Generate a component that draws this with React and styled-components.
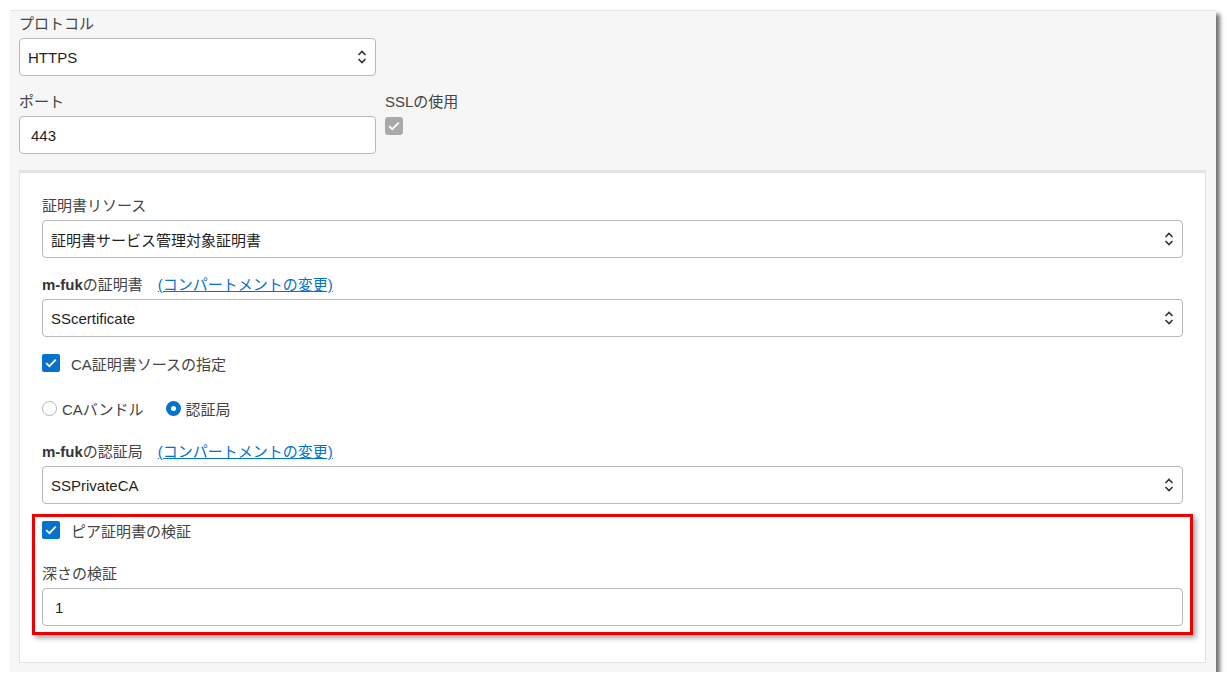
import React from "react";
import styled, { createGlobalStyle } from "styled-components";

const GlobalStyle = createGlobalStyle`
  html, body {
    margin: 0;
    padding: 0;
    background: #ffffff;
  }
  body {
    font-family: "Liberation Sans", "Noto Sans CJK JP", sans-serif;
    font-size: 15px;
    color: #333333;
  }
`;

const Frame = styled.div`
  box-sizing: border-box;
  width: 1206px;
  height: 662px;
  margin: 10px 0 0 10px;
  padding: 3px 10px 9px 9px;
  background: #f6f6f6;
  border-top: 1px solid #e4e4e4;
  box-shadow: 4px 4px 4px rgba(0, 0, 0, 0.55);
  display: flex;
  flex-direction: column;
`;

const Row = styled.div`
  display: flex;
  gap: 9px;
  margin-top: ${(p) => p.$top || 0}px;
`;

const Field = styled.div`
  display: flex;
  flex-direction: column;
  width: ${(p) => (p.$width ? `${p.$width}px` : "100%")};
  margin-top: ${(p) => p.$top || 0}px;
`;

const Label = styled.div`
  height: 20px;
  line-height: 20px;
  margin-bottom: 4px;
  color: #444;
  white-space: nowrap;

  b {
    color: #333;
    font-weight: 700;
  }
`;

const Link = styled.a`
  margin-left: 15px;
  color: #0572ce;
  text-decoration: underline;
  cursor: pointer;
`;

const Control = styled.div`
  box-sizing: border-box;
  height: 38px;
  display: flex;
  align-items: center;
  justify-content: space-between;
  padding: 0 8px 0 ${(p) => p.$pad || 8}px;
  background: #ffffff;
  border: 1px solid #b4b9be;
  border-radius: 4px;
  color: #1f1f1f;
`;

const Card = styled.div`
  box-sizing: border-box;
  flex: 1;
  margin-top: 16px;
  padding: 23px 22px 27px;
  background: #ffffff;
  border: 1px solid #e3e3e3;
  border-top: 3px solid #e4e4e5;
  display: flex;
  flex-direction: column;
`;

const CheckRow = styled.div`
  display: flex;
  align-items: center;
  height: 20px;
  margin-top: ${(p) => p.$top || 0}px;
  color: #444;
`;

const Box = styled.span`
  box-sizing: border-box;
  width: 18px;
  height: 18px;
  border-radius: ${(p) => (p.$disabled ? 3 : 2)}px;
  background: ${(p) => (p.$disabled ? "#a9a9a9" : "#0572ce")};
  display: inline-flex;
  align-items: center;
  justify-content: center;
  margin-right: ${(p) => (p.$gap != null ? p.$gap : 11)}px;
`;

const Radio = styled.span`
  box-sizing: border-box;
  width: 15px;
  height: 15px;
  border-radius: 50%;
  border: ${(p) => (p.$on ? "5px solid #0572ce" : "1px solid #b4b4b4")};
  background: #fff;
  margin-right: 5px;
`;

const RadioItem = styled.label`
  display: flex;
  align-items: center;
  margin-right: 22px;
`;

const Highlight = styled.div`
  margin: 10px -10px 0;
  padding: 3px 7px 6px;
  border: 3px solid #ee0000;
  box-shadow: 3px 3px 5px rgba(0, 0, 0, 0.35);
  display: flex;
  flex-direction: column;
`;

const Check = ({ color = "#fff" }) => (
  <svg width="12" height="10" viewBox="0 0 12 10">
    <path d="M1.2 5.2 L4.3 8.2 L10.8 1.6" fill="none" stroke={color} strokeWidth="1.8" />
  </svg>
);

const Caret = () => (
  <svg width="10" height="16" viewBox="0 0 10 16">
    <path d="M1.5 6 L5 2.5 L8.5 6 M1.5 10 L5 13.5 L8.5 10" fill="none" stroke="#333" strokeWidth="1.6" />
  </svg>
);

const Select = ({ value }) => (
  <Control>
    <span>{value}</span>
    <Caret />
  </Control>
);

const App = () => (
  <>
    <GlobalStyle />
    <Frame>
      <Field $width={357}>
        <Label>プロトコル</Label>
        <Select value="HTTPS" />
      </Field>
      <Row $top={16}>
        <Field $width={357}>
          <Label>ポート</Label>
          <Control $pad={11}>443</Control>
        </Field>
        <Field $width={120}>
          <Label>SSLの使用</Label>
          <CheckRow>
            <Box $disabled $gap={0}>
              <Check />
            </Box>
          </CheckRow>
        </Field>
      </Row>
      <Card>
        <Field>
          <Label>証明書リソース</Label>
          <Select value="証明書サービス管理対象証明書" />
        </Field>
        <Field $top={17}>
          <Label>
            <b>m-fuk</b>の証明書<Link>(コンパートメントの変更)</Link>
          </Label>
          <Select value="SScertificate" />
        </Field>
        <CheckRow $top={16}>
          <Box>
            <Check />
          </Box>
          CA証明書ソースの指定
        </CheckRow>
        <CheckRow $top={25}>
          <RadioItem>
            <Radio />
            CAバンドル
          </RadioItem>
          <RadioItem>
            <Radio $on />
            認証局
          </RadioItem>
        </CheckRow>
        <Field $top={24}>
          <Label>
            <b>m-fuk</b>の認証局<Link>(コンパートメントの変更)</Link>
          </Label>
          <Select value="SSPrivateCA" />
        </Field>
        <Highlight>
          <CheckRow>
            <Box>
              <Check />
            </Box>
            ピア証明書の検証
          </CheckRow>
          <Field $top={24}>
            <Label>深さの検証</Label>
            <Control $pad={12}>1</Control>
          </Field>
        </Highlight>
      </Card>
    </Frame>
  </>
);

export default App;
